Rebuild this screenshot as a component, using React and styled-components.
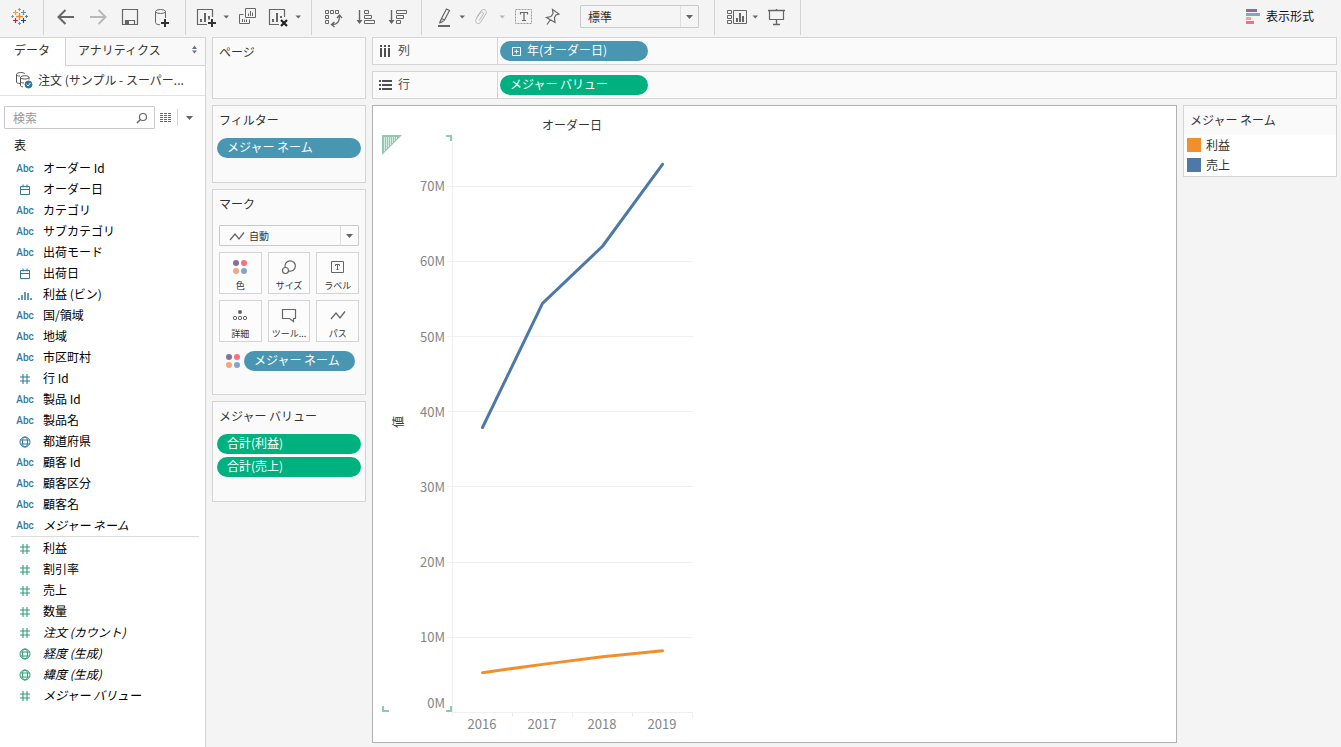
import { useState } from "react"
import styled, { createGlobalStyle, css } from "styled-components"

const GlobalStyle = createGlobalStyle`
    * {
        box-sizing: border-box;
    }

    body {
        margin: 0;
        background-color: #f4f4f4;
        color: #333333;
        font-family: "Noto Sans CJK JP", "Noto Sans", sans-serif;
        font-size: 12px;
        line-height: 20px;
    }

    button, input, select {
        margin: 0;
        padding: 0;
        color: inherit;
        font: inherit;
    }

    svg {
        display: block;
        flex: none;
    }
`

//Styled components
const Page = styled.div`
    display: flex;
    flex-direction: column;
    min-height: 100vh;
`

const Toolbar = styled.header`
    display: flex;
    height: 37px;
`

const Group = styled.div`
    display: flex;
    align-items: flex-start;
    gap: ${props => props.$gap || 8}px;
    height: 35px;
    padding: 5px ${props => props.$right || 11}px 0 ${props => props.$left || 10}px;
    border-right: 1px solid #d4d4d4;
`

const Split = styled.div`
    display: flex;
`

const IconButton = styled.button`
    display: flex;
    align-items: center;
    justify-content: center;
    width: ${props => props.$narrow ? 12 : 24}px;
    height: 24px;
    border: none;
    background: none;
    color: ${props => props.disabled ? "#b8b8b8" : "#666666"};
`

const ShowMe = styled.button`
    display: flex;
    align-items: center;
    gap: 6px;
    height: 32px;
    margin-left: auto;
    margin-right: 27px;
    border: none;
    background: none;
    color: #111111;
`

const SelectBox = styled.div`
    display: grid;
    grid-template-columns: 1fr 18px;
    align-items: center;
    width: ${props => props.$wide ? "100%" : "119px"};
    height: ${props => props.$wide ? 21 : 23}px;
    margin-left: ${props => props.$wide ? 0 : 12}px;
    border: 1px solid #c9c9c9;
    border-radius: 1px;
    background-color: ${props => props.$wide ? "#fbfbfb" : "#f5f5f5"};
    color: #666666;

    select {
        grid-area: 1 / 1 / 2 / 3;
        width: 100%;
        height: 100%;
        padding-left: ${props => props.$wide ? 29 : 7}px;
        border: none;
        background: none;
        appearance: none;
        color: #333333;
        font-size: ${props => props.$wide ? 10 : 12}px;
    }
`

const SelectIcon = styled.span`
    grid-area: 1 / 1;
    padding-left: 7px;
    pointer-events: none;
`

const SelectArrow = styled.span`
    grid-area: 1 / 2;
    display: flex;
    align-items: center;
    justify-content: center;
    height: 100%;
    border-left: 1px solid #dedede;
    pointer-events: none;
`

const Workspace = styled.div`
    display: flex;
    flex: 1;
`

const SidePanel = styled.aside`
    width: 206px;
    border-right: 1px solid #d4d4d4;
    background-color: #ffffff;
`

const Tabs = styled.div`
    display: flex;
    height: 29px;
    border-top: 1px solid #d4d4d4;
`

const Tab = styled.button`
    display: flex;
    align-items: center;
    justify-content: space-between;
    flex: ${props => props.$active ? "0 0 65px" : 1};
    padding: 0 6px 4px ${props => props.$active ? 14 : 12}px;
    border: none;
    background-color: #ffffff;

    ${props => !props.$active && css`
        border-left: 1px solid #d4d4d4;
        border-bottom: 1px solid #d4d4d4;
        background-color: #f9f9f9;
    `}
`

const Source = styled.div`
    display: flex;
    align-items: center;
    gap: 5px;
    height: 30px;
    padding: 0 16px 2px 15px;
    border-bottom: 1px solid #e2e2e2;
    white-space: nowrap;
`

const SearchRow = styled.div`
    display: flex;
    align-items: center;
    height: 23px;
    margin: 10px 0 6px 4px;
    color: #666666;
`

const SearchBox = styled.label`
    display: flex;
    align-items: center;
    width: 151px;
    height: 23px;
    padding: 0 6px 0 8px;
    border: 1px solid #c9c9c9;
    border-radius: 1px;

    input {
        flex: 1;
        min-width: 0;
        border: none;
        outline: none;
        background: none;
    }

    input::placeholder {
        color: #999999;
        opacity: 1;
    }
`

const ListButton = styled.button`
    display: flex;
    align-items: center;
    justify-content: center;
    width: 22px;
    height: 17px;
    border: none;
    background: none;
`

const Heading = styled.h2`
    margin: 0;
    padding: 0 0 2px 14px;
    color: #111111;
    font-size: 12px;
    font-weight: 400;
    line-height: 20px;
`

const FieldList = styled.ul`
    margin: 0 6px 0 11px;
    padding: 0;
    list-style: none;

    & + & {
        margin-top: 1px;
        border-top: 1px solid #dcdcdc;
    }
`

const Field = styled.li`
    display: flex;
    align-items: center;
    gap: 9px;
    height: 21px;
    padding-left: 5px;
    color: #000000;
    font-style: ${props => props.$italic ? "italic" : "normal"};
    white-space: nowrap;
`

const FieldIcon = styled.span`
    display: flex;
    justify-content: center;
    width: 18px;
    padding-top: 3px;
    color: ${props => props.$measure ? "#2f9e75" : "#30799c"};
    font-family: Roboto, sans-serif;
    font-size: 10px;
    font-style: normal;
    font-weight: 500;
    line-height: 16px;
`

const Cards = styled.div`
    display: flex;
    flex-direction: column;
    gap: 6px;
    width: 154px;
    margin: 0 6px;
`

const Card = styled.section`
    border: 1px solid #d4d4d4;
    background-color: #fafafa;
`

const CardTitle = styled.h3`
    margin: 0;
    padding: 0 6px;
    font-size: 12px;
    font-weight: 400;
    line-height: 28px;
`

const PillList = styled.div`
    display: flex;
    flex-direction: column;
    gap: 3px;
    padding: 4px 4px 24px;
`

const EmptyShelf = styled.div`
    height: 32px;
`

const Pill = styled.button`
    display: flex;
    align-items: center;
    gap: 6px;
    width: ${props => props.$width || "100%"};
    height: 20px;
    padding: 0 10px 2px;
    border: none;
    border-radius: 10px;
    background-color: ${props => props.$green ? "#00b180" : "#4996b2"};
    color: #ffffff;
    white-space: nowrap;
`

const MarksBody = styled.div`
    padding: 7px 6px 23px;
`

const MarkGrid = styled.div`
    display: grid;
    grid-template-columns: repeat(3, 1fr);
    gap: 6px;
    padding-top: 6px;
`

const MarkButton = styled.button`
    display: flex;
    flex-direction: column;
    align-items: center;
    height: 42px;
    padding-top: 4px;
    border: 1px solid #d4d4d4;
    background-color: #fcfcfc;
    color: #666666;
    font-size: 9px;
    line-height: 18px;

    span {
        color: #333333;
    }
`

const MarkPill = styled.div`
    display: flex;
    align-items: center;
    gap: 3px;
    margin: 9px 4px 0 6px;
`

const Main = styled.main`
    display: flex;
    flex: 1;
    flex-direction: column;
    gap: 6px;
    min-width: 0;
    padding: 0 4px 4px 0;
`

const Shelf = styled.div`
    display: flex;
    height: 28px;
    border: 1px solid #d4d4d4;
    background-color: #fafafa;
`

const ShelfLabel = styled.div`
    display: flex;
    align-items: center;
    gap: 6px;
    width: 125px;
    padding: 0 6px 2px;
    border-right: 1px solid #d4d4d4;
    color: #4f4f4f;
`

const ShelfBody = styled.div`
    padding: 3px 2px;
`

const Canvas = styled.div`
    display: flex;
    flex: 1;
    align-items: stretch;
    gap: 6px;
`

const Viz = styled.div`
    flex: 1;
    min-width: 0;
    border: 1px solid #b1b1b1;
    background-color: #ffffff;
`

const Legend = styled(Card)`
    align-self: flex-start;
    width: 154px;
`

const LegendItems = styled.ul`
    margin: 0;
    padding: 0 3px 1px;
    background-color: #ffffff;
    list-style: none;
    border-top: 1px solid #fafafa;
`

const LegendItem = styled.li`
    display: flex;
    align-items: center;
    gap: 5px;
    height: 20px;
`

const Swatch = styled.span`
    width: 14px;
    height: 14px;
    background-color: ${props => props.$color};
`

const AxisText = styled.text`
    fill: #858585;
    font-size: 13px;
`

//Icons
const Svg = ({ w = 24, h = 24, children, ...rest }) => (
    <svg width={w} height={h} viewBox={`0 0 ${w} ${h}`} fill="none" stroke="currentColor" aria-hidden="true" {...rest}>
        {children}
    </svg>
)

const Caret = () => (
    <Svg w={12} stroke="none">
        <path d="M3.5 10.5h5.5l-2.700 3z" fill="currentColor" />
    </Svg>
)

const BigCaret = () => (
    <Svg w={9} h={6} stroke="none">
        <path d="M1 1h7L4.500 5z" fill="currentColor" />
    </Svg>
)

const plus = (x, y, r) => `M${x - r} ${y}h${r * 2}M${x} ${y - r}v${r * 2}`

const Logo = () => (
    <Svg>
        <path d={plus(11.5, 11.5, 3.5)} stroke="#eb8a3c" strokeWidth="1.4" />
        <path d={plus(7.5, 7.5, 2.5)} stroke="#f0a03c" strokeWidth="1.2" />
        <path d={plus(15.5, 7.5, 2.5)} stroke="#5b96a8" strokeWidth="1.2" />
        <path d={plus(7.5, 15.5, 2.5)} stroke="#c8203c" strokeWidth="1.2" />
        <path d={plus(15.5, 15.5, 2.5)} stroke="#1f447e" strokeWidth="1.2" />
        <path d={plus(11.5, 4.5, 1.5)} stroke="#6fa3b4" />
        <path d={plus(11.5, 18.5, 1.5)} stroke="#8389ab" />
        <path d={plus(4.5, 11.5, 1.5)} stroke="#6fa3b4" />
        <path d={plus(18.5, 11.5, 1.5)} stroke="#6b75a3" />
    </Svg>
)

const Back = () => (
    <Svg strokeWidth="2">
        <path d="M20 12H5M11.500 5L4.500 12l7 7" />
    </Svg>
)

const Forward = () => (
    <Svg strokeWidth="2">
        <path d="M4 12h15M12.500 5l7 7-7 7" />
    </Svg>
)

const Save = () => (
    <Svg>
        <path d="M4.500 4.500h15v15h-15zM7.500 19v-3.500h9V19" strokeWidth="1.2" />
        <path d="M8 16h3v3H8z" fill="currentColor" stroke="none" />
    </Svg>
)

const DataPlus = () => (
    <Svg>
        <ellipse cx="10.500" cy="6.500" rx="5" ry="2" />
        <path d="M5.500 6.500v11c0 1.500 2 2.200 4.500 2.200M15.500 6.500V13" />
        <path d="M11 18h8M15 14v8" stroke="#333333" strokeWidth="2" />
    </Svg>
)

const SheetPlus = () => (
    <Svg>
        <path d="M16.500 12V4.500h-15v15H11" strokeWidth="1.2" />
        <path d="M5 17v-3M9 17V8M13 14.500V11" strokeWidth="2" />
        <path d="M12 18h8M16 14v8" stroke="#333333" strokeWidth="2" />
    </Svg>
)

const Duplicate = () => (
    <Svg>
        <path d="M7.500 3.500h10v9h-10zM5.500 9.500h-4v9h10v-4" />
        <path d="M10.500 11V8.500M12.500 11V6M14.500 11V7.500M4.500 17v-3M6.500 17v-2.500M8.500 17v-2.500" />
    </Svg>
)

const ClearSheet = () => (
    <Svg>
        <path d="M16.500 12V4.500h-15v15H11" strokeWidth="1.2" />
        <path d="M5 17v-3M9 17V8M13 13V11" strokeWidth="2" />
        <path d="M13 15l6 6M19 15l-6 6" stroke="#222222" strokeWidth="2.200" />
    </Svg>
)

const Swap = () => (
    <Svg>
        <path d="M3.500 5.500h3v3h-3zM8.500 5.500h3v3h-3zM13.500 5.500h3v3h-3zM3.500 10.500h3v3h-3zM3.500 15.500h3v3h-3z" />
        <path d="M17.500 11.500c0 5-2.500 8-7 8M15 13l2.500-3 2.500 3M12.500 17l-3 2.500 3 2.500" strokeWidth="1.3" />
    </Svg>
)

const SortAsc = () => (
    <Svg>
        <path d="M5.500 5v13" strokeWidth="1.400" />
        <path d="M2.500 15h6l-3 4z" fill="currentColor" stroke="none" />
        <path d="M10.500 5.500h4v3h-4zM10.500 10.500h7v3h-7zM10.500 15.500h10v3h-10z" />
    </Svg>
)

const SortDesc = () => (
    <Svg>
        <path d="M5.500 5v13" strokeWidth="1.400" />
        <path d="M2.500 15h6l-3 4z" fill="currentColor" stroke="none" />
        <path d="M10.500 5.500h10v3h-10zM10.500 10.500h7v3h-7zM10.500 15.500h4v3h-4z" />
    </Svg>
)

const Highlighter = () => (
    <Svg>
        <path d="M14.500 4l3 1.500-5 9.500-3-1.500zM9.500 13.500L8 17l1 .5 3.500-2.500M8 17l-.5 1.500" strokeWidth="1.2" />
        <path d="M6 21h12" strokeWidth="2" />
    </Svg>
)

const Clip = () => (
    <Svg>
        <path d="M4.500 12.500l4.500-6.500c2.200-3.200 7-.8 5 2.600l-5.200 8.400c-2 3.200-6.800.6-4.800-2.600l4.200-6.600c1.200-1.800 4-.3 2.900 1.600l-4 6.300" />
    </Svg>
)

const TextLabel = () => (
    <Svg>
        <path d="M3.500 4.500h16v14h-16z" strokeDasharray="2 1" stroke="#999999" />
        <path d="M8.500 9.500v-2h7v2M12 7.500v8M10 15.500h4" strokeWidth="1.2" />
    </Svg>
)

const Pin = () => (
    <Svg strokeWidth="1.2">
        <path d="M12.500 4.500l6.500 4.500-3 1-1.500 2.500.5 5-8.500-5 4.500-1 2-3zM10.500 14.500L7 19.500" />
    </Svg>
)

const CardsIcon = () => (
    <Svg>
        <path d="M2.500 5.500h4v3h-4zM2.500 10.500h4v3h-4zM2.500 15.500h4v3h-4zM8.500 5.500h13v13h-13z" />
        <path d="M12 17v-4M15 17V8M18 17v-6" strokeWidth="2" />
    </Svg>
)

const Presentation = () => (
    <Svg>
        <path d="M3 5.500h17M11.500 4v1M11.500 14v5M8 19.500h7" strokeWidth="1.4" />
        <path d="M4.500 5.500h14v9h-14z" strokeWidth="1.2" />
    </Svg>
)

const ShowMeIcon = () => (
    <Svg w={14} h={15} stroke="none">
        <path d="M0 0h11v3H0z" fill="#85709b" />
        <path d="M0 4h14v3H0z" fill="#82a5cd" />
        <path d="M0 8h5v3H0z" fill="#f2a77c" />
        <path d="M0 12h8v3H0z" fill="#fa7080" />
    </Svg>
)

const UpDown = () => (
    <Svg w={9} h={9} stroke="none">
        <path d="M2 4l2.500-3.500L7 4zM2 5.500h5L4.500 8.500z" fill="#66758a" />
    </Svg>
)

const SourceIcon = () => (
    <Svg w={18} h={18}>
        <path d="M5.500 12.500C3 12.500 1.500 12 1.500 11V3.500c0-2.500 8-2.500 8.500-.5M1.500 3.500c0 1 1.500 1.500 3.500 1.500" stroke="#555555" />
        <path d="M5.500 14.500v-8c0-2.300 8.500-2.300 8.500 0v2M5.500 6.500c0 2 8.500 2 8.500 0M5.500 10.500c0 1 1.500 1.500 3.500 1.500M5.500 14.500c0 .7.800 1.200 2.500 1.500" stroke="#555555" />
        <circle cx="13.500" cy="13.500" r="3.500" fill="#2c7ba3" stroke="#2c7ba3" />
        <path d="M11.500 13.500l1.500 1.500 2.500-3" stroke="#ffffff" />
    </Svg>
)

const SearchIcon = () => (
    <Svg w={12} h={12}>
        <circle cx="7" cy="5" r="3.500" strokeWidth="1.2" />
        <path d="M4.500 7.500L1 11" strokeWidth="1.4" />
    </Svg>
)

const ListIcon = () => (
    <Svg w={12} h={10}>
        <path d="M0 .5h12M0 2.500h12M0 4.500h12M0 6.500h12M0 8.500h12" strokeDasharray="3 1" />
    </Svg>
)

const CalendarIcon = () => (
    <Svg w={12} h={12}>
        <path d="M1.500 2.500h9v8h-9zM1.500 5.500h9M4 .5v3M8 .5v3" />
    </Svg>
)

const HashIcon = () => (
    <Svg w={12} h={12}>
        <path d="M1 4h10M1 8h10M4 1v10M8 1v10" strokeWidth="1.1" />
    </Svg>
)

const GlobeIcon = () => (
    <Svg w={12} h={12}>
        <circle cx="6" cy="6" r="5" />
        <ellipse cx="6" cy="6" rx="2.500" ry="5" />
        <path d="M1.500 4h9M1.500 8h9" />
    </Svg>
)

const BinIcon = () => (
    <Svg w={14} h={12} strokeWidth="1.5">
        <path d="M1 9v2M4 6v5M7 3v8M10 4v7M13 9v2" />
    </Svg>
)

const ColumnsIcon = () => (
    <Svg w={13} h={13} strokeWidth="2">
        <path d="M2 1v2M6 1v2M10 1v2M2 4v9M6 4v9M10 4v9" />
    </Svg>
)

const RowsIcon = () => (
    <Svg w={13} h={13} strokeWidth="2">
        <path d="M0 3h2M0 7h2M0 11h2M3 3h10M3 7h10M3 11h10" />
    </Svg>
)

const ExpandIcon = () => (
    <Svg w={11} h={11}>
        <path d="M2.500 2.500h8v8h-8zM4.500 6.500h4M6.500 4.500v4" />
    </Svg>
)

const Dots = ({ w = 20, h = 20 }) => (
    <svg width={w} height={h} viewBox={`${(20 - w) / 2} ${(20 - h) / 2} ${w} ${h}`} aria-hidden="true">
        <circle cx="6" cy="6" r="3" fill="#85709b" />
        <circle cx="14" cy="6" r="3" fill="#fa7080" />
        <circle cx="6" cy="14" r="3" fill="#f2a77c" />
        <circle cx="14" cy="14" r="3" fill="#82a5cd" />
    </svg>
)

const SizeIcon = () => (
    <Svg w={20} h={20} strokeWidth="1.2">
        <path d="M6.200 10.500a5.200 5.200 0 1 1 3.600 3.500" />
        <circle cx="6.500" cy="13.500" r="3" />
    </Svg>
)

const LabelIcon = () => (
    <Svg w={20} h={20}>
        <path d="M3.500 4.500h12v11h-12zM7.500 9V7.500h4V9M9.500 7.500v5M8.500 12.500h2" />
    </Svg>
)

const DetailIcon = () => (
    <Svg w={20} h={20}>
        <circle cx="10" cy="7" r="2" fill="currentColor" stroke="none" />
        <circle cx="5" cy="13" r="1.700" />
        <circle cx="10" cy="13" r="1.700" />
        <circle cx="15" cy="13" r="1.700" />
    </Svg>
)

const TooltipIcon = () => (
    <Svg w={20} h={20} strokeWidth="1.2">
        <path d="M3.500 4.500h13v9h-2v3l-4-3h-7z" />
    </Svg>
)

const PathIcon = () => (
    <Svg w={20} h={20} strokeWidth="1.300">
        <path d="M3 14l5-6 4 5 5-6.500" />
    </Svg>
)

//Data
const dimensions = [
    { type: "abc", name: "オーダー Id" },
    { type: "date", name: "オーダー日" },
    { type: "abc", name: "カテゴリ" },
    { type: "abc", name: "サブカテゴリ" },
    { type: "abc", name: "出荷モード" },
    { type: "date", name: "出荷日" },
    { type: "bin", name: "利益 (ビン)" },
    { type: "abc", name: "国/領域" },
    { type: "abc", name: "地域" },
    { type: "abc", name: "市区町村" },
    { type: "number", name: "行 Id" },
    { type: "abc", name: "製品 Id" },
    { type: "abc", name: "製品名" },
    { type: "geo", name: "都道府県" },
    { type: "abc", name: "顧客 Id" },
    { type: "abc", name: "顧客区分" },
    { type: "abc", name: "顧客名" },
    { type: "abc", name: "メジャー ネーム", italic: true },
]

const measures = [
    { type: "number", name: "利益" },
    { type: "number", name: "割引率" },
    { type: "number", name: "売上" },
    { type: "number", name: "数量" },
    { type: "number", name: "注文 (カウント)", italic: true },
    { type: "geo", name: "経度 (生成)", italic: true },
    { type: "geo", name: "緯度 (生成)", italic: true },
    { type: "number", name: "メジャー バリュー", italic: true },
]

const fieldIcons = {
    abc: "Abc",
    date: <CalendarIcon />,
    bin: <BinIcon />,
    number: <HashIcon />,
    geo: <GlobeIcon />,
}

const marks = [
    { label: "色", icon: <Dots /> },
    { label: "サイズ", icon: <SizeIcon /> },
    { label: "ラベル", icon: <LabelIcon /> },
    { label: "詳細", icon: <DetailIcon /> },
    { label: "ツール...", icon: <TooltipIcon /> },
    { label: "パス", icon: <PathIcon /> },
]

const years = [2016, 2017, 2018, 2019]

// values in millions
const series = [
    { name: "利益", color: "#f28e2b", values: [5.3, 6.4, 7.4, 8.2] },
    { name: "売上", color: "#4e79a7", values: [37.9, 54.4, 62, 72.9] },
]

//Chart
const scaleX = (i) => 109.5 + i * 60
const scaleY = (v) => 606.5 - v * 7.52

const Chart = () => (
    <svg width="330" height="630" viewBox="0 0 330 630" fill="none" role="img" aria-label="オーダー日">
        <text x="199" y="24" textAnchor="middle" fontSize="12" fill="#333333">オーダー日</text>
        <path d="M9 29h20L9 49z" fill="#8ec9b0" />
        <path d="M11.500 31v14M13.500 31v12M15.500 31v10M17.500 31v8M19.500 31v6M21.500 31v4M23.500 31v2" stroke="#d5ebe1" />
        <path d="M73 30h5v5M10 600v5h6M73 605h5v-5" stroke="#8ec9b0" strokeWidth="2" />
        <path d="M79.500 30v580M79 606.500h241" stroke="#f0f0f0" />
        {[10, 20, 30, 40, 50, 60, 70].map((v) => (
            <path key={v} d={`M74 ${Math.floor(scaleY(v)) + 0.5}h246`} stroke="#f0f0f0" />
        ))}
        {[1, 2, 3, 4].map((i) => (
            <path key={i} d={`M${79.5 + i * 60} 607v4`} stroke="#ececec" />
        ))}
        {[0, 10, 20, 30, 40, 50, 60, 70].map((v) => (
            <AxisText key={v} x="72" y={Math.min(Math.round(scaleY(v)) + 5, 602)} textAnchor="end">{v}M</AxisText>
        ))}
        {years.map((year, i) => (
            <AxisText key={year} x={109 + i * 60} y="623" textAnchor="middle">{year}</AxisText>
        ))}
        <text transform="translate(30 316) rotate(-90)" textAnchor="middle" fontSize="12" fill="#333333">値</text>
        {series.map((s) => (
            <polyline
                key={s.name}
                points={s.values.map((v, i) => `${scaleX(i)},${scaleY(v)}`).join(" ")}
                stroke={s.color}
                strokeWidth="3"
                strokeLinecap="round"
                strokeLinejoin="round"
            />
        ))}
    </svg>
)

const Tool = ({ label, children, ...rest }) => (
    <IconButton type="button" aria-label={label} {...rest}>{children}</IconButton>
)

const Fields = ({ items, measure }) => (
    <FieldList>
        {items.map((item) => (
            <Field key={item.name} $italic={item.italic}>
                <FieldIcon $measure={measure}>{fieldIcons[item.type]}</FieldIcon>
                {item.name}
            </Field>
        ))}
    </FieldList>
)

const App = () => {
    const [tab, setTab] = useState("data")
    const [search, setSearch] = useState("")

    return (
        <>
            <GlobalStyle />
            <Page>
                <Toolbar>
                    <Group $left={8}>
                        <Tool label="Tableau"><Logo /></Tool>
                    </Group>
                    <Group>
                        <Tool label="元に戻す"><Back /></Tool>
                        <Tool label="やり直し" disabled><Forward /></Tool>
                        <Tool label="保存"><Save /></Tool>
                        <Tool label="新しいデータ ソース"><DataPlus /></Tool>
                    </Group>
                    <Group $gap={6} $right={7}>
                        <Split>
                            <Tool label="新しいワークシート"><SheetPlus /></Tool>
                            <Tool label="新規メニュー" $narrow><Caret /></Tool>
                        </Split>
                        <Tool label="複製"><Duplicate /></Tool>
                        <Split>
                            <Tool label="シートのクリア"><ClearSheet /></Tool>
                            <Tool label="クリア メニュー" $narrow><Caret /></Tool>
                        </Split>
                    </Group>
                    <Group>
                        <Tool label="行と列の交換"><Swap /></Tool>
                        <Tool label="昇順"><SortAsc /></Tool>
                        <Tool label="降順"><SortDesc /></Tool>
                    </Group>
                    <Group $gap={4} $right={15}>
                        <Split>
                            <Tool label="ハイライト"><Highlighter /></Tool>
                            <Tool label="ハイライト メニュー" $narrow><Caret /></Tool>
                        </Split>
                        <Split>
                            <Tool label="グループ" disabled><Clip /></Tool>
                            <Tool label="グループ メニュー" $narrow disabled><Caret /></Tool>
                        </Split>
                        <Tool label="マーク ラベル"><TextLabel /></Tool>
                        <Tool label="軸の固定"><Pin /></Tool>
                        <SelectBox>
                            <select aria-label="サイズ調整" defaultValue="標準">
                                <option>標準</option>
                            </select>
                            <SelectArrow><BigCaret /></SelectArrow>
                        </SelectBox>
                    </Group>
                    <Group $gap={4}>
                        <Split>
                            <Tool label="カードの表示"><CardsIcon /></Tool>
                            <Tool label="カード メニュー" $narrow><Caret /></Tool>
                        </Split>
                        <Tool label="プレゼンテーション"><Presentation /></Tool>
                    </Group>
                    <ShowMe type="button"><ShowMeIcon />表示形式</ShowMe>
                </Toolbar>

                <Workspace>
                    <SidePanel>
                        <Tabs>
                            <Tab type="button" $active={tab === "data"} onClick={() => setTab("data")}>データ</Tab>
                            <Tab type="button" $active={tab === "analytics"} onClick={() => setTab("analytics")}>
                                アナリティクス
                                <UpDown />
                            </Tab>
                        </Tabs>
                        <Source><SourceIcon />注文 (サンプル - スーパー...</Source>
                        <SearchRow>
                            <SearchBox>
                                <input aria-label="検索" placeholder="検索" value={search} onChange={(e) => setSearch(e.target.value)} />
                                <SearchIcon />
                            </SearchBox>
                            <ListButton type="button" aria-label="表示"><ListIcon /></ListButton>
                            <svg width="1" height="17" aria-hidden="true"><path d="M.5 0v17" stroke="#d4d4d4" /></svg>
                            <ListButton type="button" aria-label="メニュー"><BigCaret /></ListButton>
                        </SearchRow>
                        <Heading>表</Heading>
                        <Fields items={dimensions} />
                        <Fields items={measures} measure />
                    </SidePanel>

                    <Cards>
                        <Card>
                            <CardTitle>ページ</CardTitle>
                            <EmptyShelf />
                        </Card>
                        <Card>
                            <CardTitle>フィルター</CardTitle>
                            <PillList>
                                <Pill type="button">メジャー ネーム</Pill>
                            </PillList>
                        </Card>
                        <Card>
                            <CardTitle>マーク</CardTitle>
                            <MarksBody>
                                <SelectBox $wide>
                                    <select aria-label="マーク タイプ" defaultValue="自動">
                                        <option>自動</option>
                                    </select>
                                    <SelectIcon><PathIcon /></SelectIcon>
                                    <SelectArrow><BigCaret /></SelectArrow>
                                </SelectBox>
                                <MarkGrid>
                                    {marks.map((mark) => (
                                        <MarkButton key={mark.label} type="button">
                                            {mark.icon}
                                            <span>{mark.label}</span>
                                        </MarkButton>
                                    ))}
                                </MarkGrid>
                                <MarkPill>
                                    <Dots w={16} h={16} />
                                    <Pill type="button">メジャー ネーム</Pill>
                                </MarkPill>
                            </MarksBody>
                        </Card>
                        <Card>
                            <CardTitle>メジャー バリュー</CardTitle>
                            <PillList>
                                <Pill type="button" $green>合計(利益)</Pill>
                                <Pill type="button" $green>合計(売上)</Pill>
                            </PillList>
                        </Card>
                    </Cards>

                    <Main>
                        <Shelf>
                            <ShelfLabel><ColumnsIcon />列</ShelfLabel>
                            <ShelfBody>
                                <Pill type="button" $width="148px"><ExpandIcon />年(オーダー日)</Pill>
                            </ShelfBody>
                        </Shelf>
                        <Shelf>
                            <ShelfLabel><RowsIcon />行</ShelfLabel>
                            <ShelfBody>
                                <Pill type="button" $width="148px" $green>メジャー バリュー</Pill>
                            </ShelfBody>
                        </Shelf>
                        <Canvas>
                            <Viz><Chart /></Viz>
                            <Legend>
                                <CardTitle>メジャー ネーム</CardTitle>
                                <LegendItems>
                                    {series.map((s) => (
                                        <LegendItem key={s.name}>
                                            <Swatch $color={s.color} />
                                            {s.name}
                                        </LegendItem>
                                    ))}
                                </LegendItems>
                            </Legend>
                        </Canvas>
                    </Main>
                </Workspace>
            </Page>
        </>
    )
}

export default App
